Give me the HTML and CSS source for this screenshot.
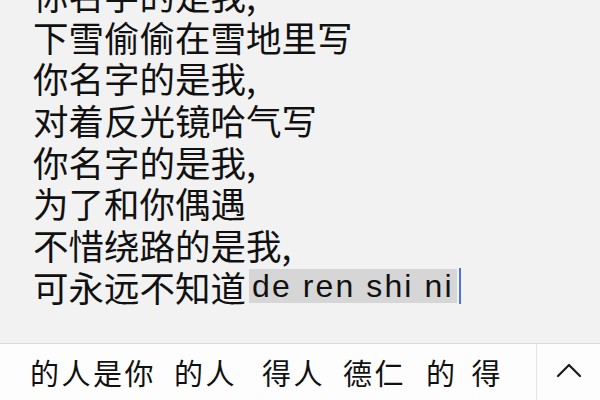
FILE: index.html
```html
<!DOCTYPE html>
<html lang="zh">
<head>
<meta charset="utf-8">
<link rel="stylesheet" href="styles.css">
</head>
<body>
<div class="screen">
  <div class="editor">
    <div class="lines">
      <div class="line">你名字的是我,</div>
      <div class="line">下雪偷偷在雪地里写</div>
      <div class="line">你名字的是我,</div>
      <div class="line">对着反光镜哈气写</div>
      <div class="line">你名字的是我,</div>
      <div class="line">为了和你偶遇</div>
      <div class="line">不惜绕路的是我,</div>
      <div class="line">可永远不知道<span class="compose">de ren shi ni</span><span class="caret"></span></div>
    </div>
  </div>
  <div class="candbar">
    <div class="cands">
      <span class="cand c1">的人是你</span>
      <span class="cand c2">的人</span>
      <span class="cand c3">得人</span>
      <span class="cand c4">德仁</span>
      <span class="cand c5">的</span>
      <span class="cand c6">得</span>
    </div>
    <div class="more">
      <svg width="26" height="16" viewBox="0 0 26 16"><path d="M2 14 L13 3 L24 14" fill="none" stroke="#1a1a1a" stroke-width="2.2" stroke-linecap="round" stroke-linejoin="round"/></svg>
    </div>
  </div>
</div>
</body>
</html>
```

FILE: styles.css
```css
html, body {
  margin: 0;
  padding: 0;
}
body {
  width: 600px;
  height: 400px;
  overflow: hidden;
  font-family: "Noto Sans CJK SC", "Noto Sans", sans-serif;
  color: #111111;
}
.screen {
  width: 600px;
  height: 400px;
  display: flex;
  flex-direction: column;
  background: #f2f2f2;
}
.editor {
  height: 343px;
  overflow: hidden;
  padding-left: 33px;
  flex: none;
}
.lines {
  margin-top: -26px;
}
.line {
  font-size: 35.5px;
  font-weight: 400;
  line-height: 41.67px;
  height: 41.67px;
  white-space: nowrap;
  display: flex;
  align-items: center;
}
.compose {
  font-family: "Liberation Sans", "Noto Sans", sans-serif;
  font-weight: 400;
  font-size: 32px;
  letter-spacing: 2.1px;
  background: #d6d6d6;
  height: 34px;
  line-height: 34px;
  padding: 0 3px 0 3px;
  margin-left: 3px;
  display: inline-flex;
  align-items: center;
}
.caret {
  display: inline-block;
  width: 2px;
  height: 36px;
  background: #4f74d9;
  margin-left: 2px;
}
.candbar {
  flex: 1;
  display: flex;
  background: #fdfdfd;
  border-top: 1px solid #dadada;
}
.cands {
  flex: 1;
  display: flex;
  align-items: center;
  padding-left: 30px;
  font-size: 29px;
  font-weight: 400;
  letter-spacing: 2.5px;
  white-space: nowrap;
}
.cand { margin-right: 18px; }
.c2 { margin-right: 25px; }
.c4 { margin-right: 20px; }
.c5 { margin-right: 14px; }
.more {
  width: 64px;
  border-left: 1px solid #e4e4e4;
  display: flex;
  align-items: center;
  justify-content: center;
  padding-bottom: 4px;
  box-sizing: border-box;
}
```
